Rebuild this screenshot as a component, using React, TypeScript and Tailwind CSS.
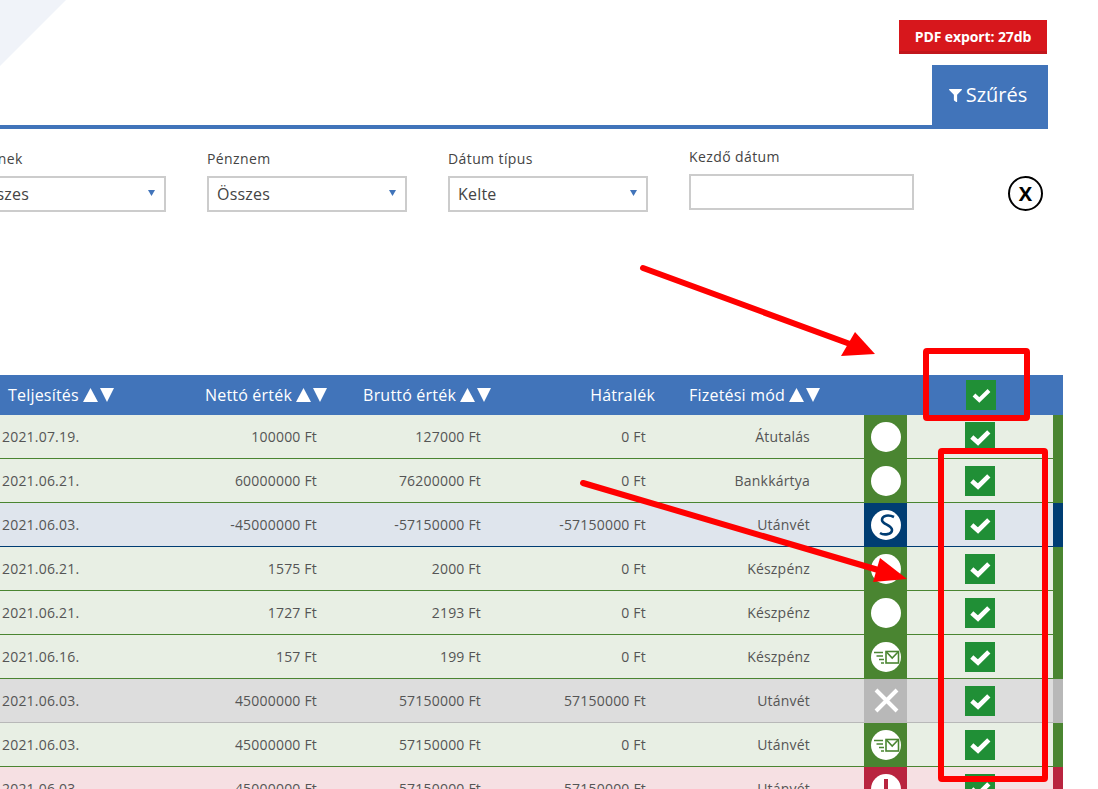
import React from "react";
import { FaFilter } from "react-icons/fa";

type Tone = "green" | "blue" | "gray" | "red";
type Icon = "blank" | "s" | "mail" | "x" | "alert";
type Row = { d: string; n: string; b: string; h: string; m: string; tone: Tone; icon: Icon };

const rows: Row[] = [
  { d: "2021.07.19.", n: "100000 Ft", b: "127000 Ft", h: "0 Ft", m: "Átutalás", tone: "green", icon: "blank" },
  { d: "2021.06.21.", n: "60000000 Ft", b: "76200000 Ft", h: "0 Ft", m: "Bankkártya", tone: "green", icon: "blank" },
  { d: "2021.06.03.", n: "-45000000 Ft", b: "-57150000 Ft", h: "-57150000 Ft", m: "Utánvét", tone: "blue", icon: "s" },
  { d: "2021.06.21.", n: "1575 Ft", b: "2000 Ft", h: "0 Ft", m: "Készpénz", tone: "green", icon: "blank" },
  { d: "2021.06.21.", n: "1727 Ft", b: "2193 Ft", h: "0 Ft", m: "Készpénz", tone: "green", icon: "blank" },
  { d: "2021.06.16.", n: "157 Ft", b: "199 Ft", h: "0 Ft", m: "Készpénz", tone: "green", icon: "mail" },
  { d: "2021.06.03.", n: "45000000 Ft", b: "57150000 Ft", h: "57150000 Ft", m: "Utánvét", tone: "gray", icon: "x" },
  { d: "2021.06.03.", n: "45000000 Ft", b: "57150000 Ft", h: "0 Ft", m: "Utánvét", tone: "green", icon: "mail" },
  { d: "2021.06.03.", n: "45000000 Ft", b: "57150000 Ft", h: "57150000 Ft", m: "Utánvét", tone: "red", icon: "alert" },
];

const toneRow: Record<Tone, string> = {
  green: "bg-[#e8efe4] border-[#4a8531]",
  blue: "bg-[#dfe5ed] border-[#003d73]",
  gray: "bg-[#dddddd] border-[#b8b8b8]",
  red: "bg-[#f6e0e3] border-[#b9243f]",
};
const toneBar: Record<Tone, string> = {
  green: "bg-[#4a8531]",
  blue: "bg-[#003d73]",
  gray: "bg-[#b8b8b8]",
  red: "bg-[#b9243f]",
};

function StatusIcon({ icon }: { icon: Icon }) {
  if (icon === "x") {
    return (
      <svg width="30" height="30" viewBox="0 0 30 30">
        <path d="M5 4L26 25M26 4L5 25" stroke="#fff" strokeWidth="4" fill="none" />
      </svg>
    );
  }
  return (
    <svg width="30" height="30" viewBox="0 0 30 30">
      <circle cx="15" cy="15" r="15" fill="#fff" />
      {icon === "s" && (
        <path
          d="M23 7C18 4.5 11 5 11 10C11 14.5 21 15 21 20C21 24.5 13 25.5 9 23"
          fill="none"
          stroke="#003d73"
          strokeWidth="2.6"
        />
      )}
      {icon === "mail" && (
        <g fill="none" stroke="#4a8531">
          <rect x="15" y="9.5" width="12.5" height="11.5" strokeWidth="1.6" />
          <path d="M15.5 10L21.2 16L27 10" strokeWidth="1.6" />
          <path d="M3 10.5H12M5.5 14H12M8 17.5H13M10 21H13" strokeWidth="1.5" />
        </g>
      )}
      {icon === "alert" && <path d="M15 5V18" stroke="#b9243f" strokeWidth="4" />}
    </svg>
  );
}

function CheckBox({ header = false }: { header?: boolean }) {
  return (
    <span className="flex h-[30px] w-[30px] items-center justify-center bg-[#208f36]">
      <svg width="30" height="30" viewBox="0 0 30 30">
        {header ? (
          <polyline points="8,15 13.3,20 23,10.5" fill="none" stroke="#fff" strokeWidth="4" />
        ) : (
          <polyline points="6.8,15 13,20.5 23.8,9.8" fill="none" stroke="#fff" strokeWidth="4.6" />
        )}
      </svg>
    </span>
  );
}

function SortHead({ label }: { label: string }) {
  return (
    <span className="inline-flex items-center justify-end gap-[4px]">
      {label}
      <span className="inline-flex gap-[2px]">
        <svg width="15" height="14" viewBox="0 0 15 14"><path d="M7.5 0L15 14H0Z" fill="#fff" /></svg>
        <svg width="14" height="14" viewBox="0 0 14 14"><path d="M0 0H14L7 14Z" fill="#fff" /></svg>
      </span>
    </span>
  );
}

function Select({ value }: { value: string }) {
  return (
    <div className="flex h-[36px] w-[200px] items-center justify-between border-2 border-[#cccccc] bg-white pl-[8px] pr-[9px] text-[16px] text-[#444]">
      <span>{value}</span>
      <svg width="7" height="6" viewBox="0 0 7 6" className="mb-[2px]"><path d="M0 0H7L3.5 6Z" fill="#4174ba" /></svg>
    </div>
  );
}

export default function App() {
  return (
    <div
      className="relative h-[789px] w-[1098px] overflow-hidden bg-white text-[14px] tracking-[0.2px] text-[#555]"
      style={{ fontFamily: '"Open Sans", sans-serif' }}
    >
      <svg width="70" height="70" className="absolute left-0 top-0">
        <polygon points="0,0 66,0 0,66" fill="#f0f3f9" />
      </svg>

      <div className="relative flex h-[129px] w-[1048px] flex-col items-end border-b-4 border-[#4174ba]">
        <button className="mr-px mt-[20px] h-[34px] w-[148px] border-b-[3px] border-[#c2161c] bg-[#d7171c] pt-[2px] text-[14px] font-bold tracking-[-0.1px] text-white">
          PDF export: 27db
        </button>
        <div className="mt-[11px] flex h-[60px] w-[116px] items-center justify-center gap-[4px] bg-[#4174ba] pr-[4px] text-[20px] tracking-normal text-white">
          <FaFilter size={13} />
          <span>Szűrés</span>
        </div>
      </div>

      <div className="flex h-[246px] items-start pt-[20px] tracking-[0.4px]">
        <div className="ml-[-34px] w-[200px]">
          <div className="h-[20px] pr-[148px] text-right text-[14px] leading-[20px] text-[#444]">Egyének</div>
          <div className="mt-[7px] tracking-[0.2px]"><Select value="Összes" /></div>
        </div>
        <div className="ml-[41px] w-[200px]">
          <div className="h-[20px] text-[14px] leading-[20px] text-[#444]">Pénznem</div>
          <div className="mt-[7px] tracking-[0.2px]"><Select value="Összes" /></div>
        </div>
        <div className="ml-[41px] w-[200px]">
          <div className="h-[20px] text-[14px] leading-[20px] text-[#444]">Dátum típus</div>
          <div className="mt-[7px] tracking-[0.2px]"><Select value="Kelte" /></div>
        </div>
        <div className="ml-[41px] mt-[-2px] w-[225px]">
          <div className="h-[20px] text-[14px] leading-[20px] text-[#444]">Kezdő dátum</div>
          <div className="mt-[7px] h-[36px] w-[225px] border-2 border-[#cccccc] bg-white" />
        </div>
        <div className="ml-[94px] mt-[27px] flex h-[35px] w-[35px] items-center justify-center rounded-full border-2 border-black text-[20px] font-bold leading-none text-black">
          X
        </div>
      </div>

      <div className="w-[1063px]">
        <div className="grid h-[40px] grid-cols-[170px_157px_164px_164px_165px_84px_61px_98px] items-center bg-[#4174ba] text-[16px] text-white">
          <div className="pl-[8px]"><SortHead label="Teljesítés" /></div>
          <div className="text-right"><SortHead label="Nettó érték" /></div>
          <div className="text-right"><SortHead label="Bruttó érték" /></div>
          <div className="text-right">Hátralék</div>
          <div className="text-right"><SortHead label="Fizetési mód" /></div>
          <div />
          <div />
          <div className="flex justify-start -ml-[9px] pl-[10px]"><CheckBox header /></div>
        </div>
        {rows.map((r, i) => (
          <div
            key={i}
            className={`grid h-[44px] grid-cols-[160px_158px_164px_165px_164px_53px_43px_146px_10px] border-b ${toneRow[r.tone]}`}
          >
            <div className="flex items-center pl-[2px]">{r.d}</div>
            <div className="flex items-center justify-end pr-px">{r.n}</div>
            <div className="flex items-center justify-end pr-px">{r.b}</div>
            <div className="flex items-center justify-end pr-px">{r.h}</div>
            <div className="flex items-center justify-end pr-px">{r.m}</div>
            <div />
            <div className={`flex items-center justify-center ${toneBar[r.tone]}`}>
              <StatusIcon icon={r.icon} />
            </div>
            <div className="flex items-center justify-center"><CheckBox /></div>
            <div className={toneBar[r.tone]} />
          </div>
        ))}
      </div>

      <svg width="1098" height="789" className="pointer-events-none absolute left-0 top-0">
        <g fill="none" stroke="#ff0000" strokeWidth="6" strokeLinejoin="round">
          <rect x="926" y="351" width="101" height="67" rx="1" />
          <rect x="941" y="451" width="104" height="328" rx="1" />
        </g>
        <g stroke="#ff0000" strokeWidth="6" strokeLinecap="round">
          <line x1="643" y1="268" x2="850" y2="344" />
          <line x1="583" y1="483" x2="885" y2="572" />
        </g>
        <polygon points="875,354 841,356 855,332" fill="#ff0000" />
        <polygon points="907,579 873,582 880,558" fill="#ff0000" />
      </svg>
    </div>
  );
}
